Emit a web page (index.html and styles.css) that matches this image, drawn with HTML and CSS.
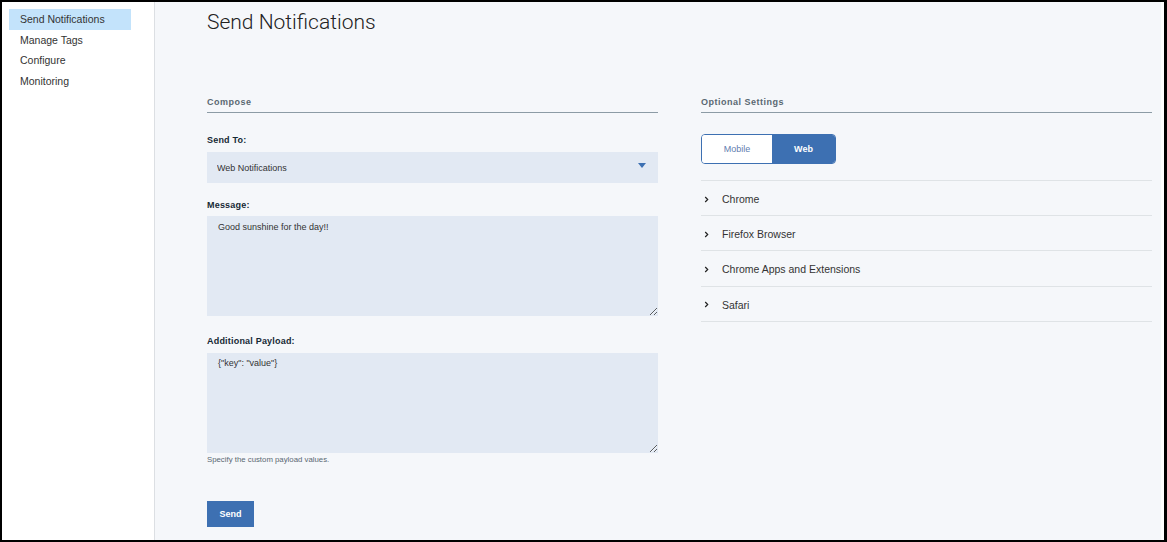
FILE: index.html
```html
<!DOCTYPE html>
<html lang="en">
<head>
<meta charset="utf-8">
<title>Send Notifications</title>
<link rel="stylesheet" href="styles.css">
</head>
<body>
<div class="frame">
  <aside class="sidebar">
    <nav class="nav">
      <a class="nav-item active">Send Notifications</a>
      <a class="nav-item">Manage Tags</a>
      <a class="nav-item">Configure</a>
      <a class="nav-item">Monitoring</a>
    </nav>
  </aside>
  <main class="main">
    <h1 class="title">Send Notifications</h1>
    <div class="columns">
      <section class="col">
        <h2 class="section-head">Compose</h2>
        <label class="label">Send To:</label>
        <div class="select-wrap">
          <select class="select"><option>Web Notifications</option></select>
          <svg class="select-arrow" width="8" height="5" viewBox="0 0 8 5"><path d="M0 0h8L4 5z" fill="#3d70b2"/></svg>
        </div>
        <label class="label">Message:</label>
        <textarea class="field">Good sunshine for the day!!</textarea>
        <label class="label">Additional Payload:</label>
        <textarea class="field">{"key": "value"}</textarea>
        <p class="helper">Specify the custom payload values.</p>
        <button class="btn">Send</button>
      </section>
      <section class="col">
        <h2 class="section-head">Optional Settings</h2>
        <div class="toggle">
          <button class="seg seg-mobile">Mobile</button>
          <button class="seg seg-web">Web</button>
        </div>
        <ul class="accordion">
          <li class="acc-row"><svg class="chev" width="5" height="7" viewBox="0 0 5 7"><path d="M1.2 1L3.7 3.5L1.2 6" fill="none" stroke="#222" stroke-width="1.2"/></svg><span>Chrome</span></li>
          <li class="acc-row"><svg class="chev" width="5" height="7" viewBox="0 0 5 7"><path d="M1.2 1L3.7 3.5L1.2 6" fill="none" stroke="#222" stroke-width="1.2"/></svg><span>Firefox Browser</span></li>
          <li class="acc-row"><svg class="chev" width="5" height="7" viewBox="0 0 5 7"><path d="M1.2 1L3.7 3.5L1.2 6" fill="none" stroke="#222" stroke-width="1.2"/></svg><span>Chrome Apps and Extensions</span></li>
          <li class="acc-row"><svg class="chev" width="5" height="7" viewBox="0 0 5 7"><path d="M1.2 1L3.7 3.5L1.2 6" fill="none" stroke="#222" stroke-width="1.2"/></svg><span>Safari</span></li>
        </ul>
      </section>
    </div>
  </main>
</div>
</body>
</html>
```
FILE: styles.css
```css
* { box-sizing: border-box; }
html, body { margin: 0; padding: 0; background: #000; }
body { font-family: "Liberation Sans", Arial, sans-serif; color: #333; }

.frame {
  display: flex;
  height: 542px;
  border-style: solid;
  border-color: #000;
  border-width: 2px 3px 2px 2px;
  overflow: hidden;
}

.sidebar {
  width: 153px;
  flex: none;
  background: #fff;
  border-right: 1px solid #dcdfe3;
  padding: 7px 0 0 7px;
}
.nav { display: flex; flex-direction: column; }
.nav-item {
  display: block;
  width: 122px;
  height: 20.6px;
  line-height: 20.6px;
  padding-left: 11px;
  font-size: 10.5px;
  color: #333;
}
.nav-item.active { background: #c3e3fb; }

.main {
  flex: 1;
  background: #f5f7fa;
  border-right: 3px solid #fff;
  padding: 8px 9px 0 52px;
}
.title {
  margin: 0;
  font-family: Roboto, "Liberation Sans", sans-serif;
  font-weight: 300;
  font-size: 21px;
  line-height: 24px;
  color: #222;
}

.columns {
  display: grid;
  grid-template-columns: 1fr 1fr;
  column-gap: 43px;
  margin-top: 62px;
}
.col { display: flex; flex-direction: column; align-items: flex-start; }

.section-head {
  align-self: stretch;
  margin: 0;
  font-size: 9px;
  font-weight: bold;
  letter-spacing: 0.5px;
  line-height: 12px;
  color: #5a6872;
  padding-bottom: 4px;
  border-bottom: 1px solid #8c9ba5;
}

.label {
  display: block;
  font-size: 9px;
  font-weight: bold;
  letter-spacing: 0.2px;
  line-height: 12px;
  color: #152935;
  margin-top: 21px;
  margin-bottom: 6px;
}

.select-wrap { position: relative; align-self: stretch; }
.select {
  display: block;
  width: 100%;
  height: 31px;
  appearance: none;
  -webkit-appearance: none;
  border: none;
  border-radius: 0;
  background: #e2e9f3;
  padding: 0 10px;
  font-family: "Liberation Sans", Arial, sans-serif;
  font-size: 9px;
  color: #333;
  outline: none;
}
.select-arrow { position: absolute; right: 12px; top: 11px; }

.select-wrap + .label { margin-top: 16px; margin-bottom: 5px; }

.field {
  display: block;
  align-self: stretch;
  height: 100px;
  border: none;
  border-radius: 0;
  background: #e2e9f3;
  padding: 5px 11px;
  font-family: "Liberation Sans", Arial, sans-serif;
  font-size: 9px;
  line-height: 12px;
  color: #333;
  resize: vertical;
  outline: none;
}
.field + .label { margin-top: 19px; margin-bottom: 6px; }
.label + .field + .label + .field { padding-top: 4px; }

.helper {
  margin: 2px 0 0;
  font-size: 7.8px;
  line-height: 10px;
  color: #5a6872;
}

.btn {
  margin-top: 36px;
  width: 47px;
  height: 26px;
  border: none;
  background: #3d70b2;
  color: #fff;
  font-family: "Liberation Sans", Arial, sans-serif;
  font-size: 9px;
  font-weight: bold;
  padding: 0;
}

.toggle {
  display: flex;
  margin-top: 21px;
  height: 30px;
  border: 1px solid #3d70b2;
  border-radius: 4px;
  overflow: hidden;
}
.seg {
  border: none;
  padding: 0;
  font-family: "Liberation Sans", Arial, sans-serif;
  font-size: 9px;
}
.seg-mobile { width: 70px; background: #fff; color: #5f7db0; }
.seg-web { width: 63px; background: #3d70b2; color: #fff; font-weight: bold; }

.accordion {
  list-style: none;
  margin: 16px 0 0;
  padding: 0;
  align-self: stretch;
  border-top: 1px solid #dfe3e6;
}
.acc-row {
  display: flex;
  align-items: center;
  height: 35.2px;
  border-bottom: 1px solid #dfe3e6;
  padding: 2px 0 0 3px;
  font-size: 10.5px;
  color: #333;
}
.chev { margin-right: 13px; flex: none; }
```
